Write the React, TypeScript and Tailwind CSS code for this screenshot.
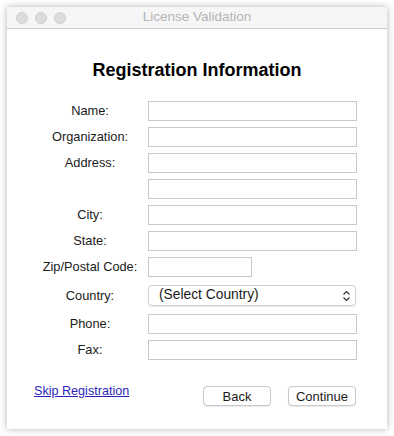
import React from 'react';

const FONT = { fontFamily: '"Liberation Sans", Arial, sans-serif' };

function Field({ label, w = 'w-[209px]' }: { label: string; w?: string }) {
  return (
    <div className="flex h-[20px] items-center">
      <span className="w-[100px] text-center text-[12.8px] text-[#1a1a1a]">{label}</span>
      <input className={`ml-[8px] h-[20px] ${w} border border-[#c8c8c8] bg-white outline-none`} />
    </div>
  );
}

export default function App() {
  return (
    <div className="h-[436px] w-[394px] bg-white p-[7px]" style={FONT}>
      <div className="flex h-[422px] w-[380px] flex-col bg-white shadow-[0_0_7px_rgba(0,0,0,0.3)]">
        <div className="relative flex h-[22px] items-center border-b border-[#d2d2d2] bg-[#f6f6f6]">
          <div className="ml-[9px] flex gap-[7px]">
            <span className="h-[12px] w-[12px] rounded-full bg-[#dcdcdc] border border-[#d0d0d0]" />
            <span className="h-[12px] w-[12px] rounded-full bg-[#dcdcdc] border border-[#d0d0d0]" />
            <span className="h-[12px] w-[12px] rounded-full bg-[#dcdcdc] border border-[#d0d0d0]" />
          </div>
          <span className="absolute inset-x-0 text-center text-[13.5px] text-[#b4b4b4]">License Validation</span>
        </div>

        <h1 className="mt-[31px] text-center text-[18px] font-bold leading-[20px] text-black">
          Registration Information
        </h1>

        <div className="mt-[21px] flex flex-col pl-[33px]">
          <div className="flex flex-col gap-[6px]">
            <Field label="Name:" />
            <Field label="Organization:" />
            <Field label="Address:" />
            <Field label="" />
            <Field label="City:" />
            <Field label="State:" />
            <Field label="Zip/Postal Code:" w="w-[104px]" />
          </div>

          <div className="mt-[8px] flex h-[21px] items-center">
            <span className="w-[100px] text-center text-[12.8px] text-[#1a1a1a]">Country:</span>
            <div className="ml-[8px] flex h-[21px] w-[208px] items-center justify-between rounded-[4px] border border-[#cfcfcf] bg-white pl-[10px] pr-[4px] shadow-[0_1px_1px_rgba(0,0,0,0.08)]">
              <span className="text-[13.8px] text-[#1a1a1a]">(Select Country)</span>
              <svg width="9" height="12" viewBox="0 0 9 12" fill="none" stroke="#333" strokeWidth="1.2">
                <path d="M1.5 4.5 L4.5 1.5 L7.5 4.5" />
                <path d="M1.5 7.5 L4.5 10.5 L7.5 7.5" />
              </svg>
            </div>
          </div>

          <div className="mt-[8px] flex flex-col gap-[6px]">
            <Field label="Phone:" />
            <Field label="Fax:" />
          </div>
        </div>

        <div className="mt-[24px] flex items-start pl-[27px] pr-[31px]">
          <a href="#" className="text-[12.6px] leading-[14px] text-[#2c1fb8] underline">Skip Registration</a>
          <div className="ml-auto mt-[2px] flex gap-[17px]">
            <button className="h-[20px] w-[68px] rounded-[4px] border border-[#c8c8c8] bg-white text-[13px] text-[#1a1a1a] shadow-[0_1px_1px_rgba(0,0,0,0.08)]">Back</button>
            <button className="h-[20px] w-[68px] rounded-[4px] border border-[#c8c8c8] bg-white text-[13px] text-[#1a1a1a] shadow-[0_1px_1px_rgba(0,0,0,0.08)]">Continue</button>
          </div>
        </div>
      </div>
    </div>
  );
}
